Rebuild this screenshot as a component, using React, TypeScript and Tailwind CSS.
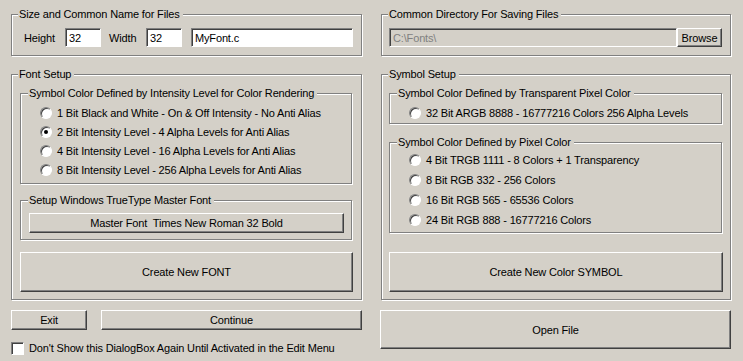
import React from 'react';
import clsx from 'clsx';

function Group({ label, className, labelClass, children }: { label: string; className?: string; labelClass?: string; children?: React.ReactNode }) {
  return (
    <div className={clsx('relative border border-[#808080] shadow-[inset_1px_1px_#fff,1px_1px_#fff]', className)}>
      <span className={clsx('absolute -top-[8px] bg-[#d4d0c8] pl-px pr-[3px] leading-[14px] whitespace-nowrap', labelClass ?? 'left-[6px]')}>
        {label}
      </span>
      {children}
    </div>
  );
}

function Btn({ className, children }: { className?: string; children: React.ReactNode }) {
  return (
    <button
      className={clsx(
        'flex items-center justify-center whitespace-pre border border-t-white border-l-white border-r-[#404040] border-b-[#404040] bg-[#d4d0c8] text-black shadow-[inset_-1px_-1px_#808080]',
        className
      )}
    >
      {children}
    </button>
  );
}

function Field({ value, className, disabled }: { value: string; className?: string; disabled?: boolean }) {
  return (
    <div
      className={clsx(
        'flex h-[19px] items-center border border-t-[#808080] border-l-[#808080] border-r-white border-b-white pl-[3px] shadow-[inset_1px_1px_#404040]',
        disabled ? 'bg-[#d4d0c8] text-[#808080]' : 'bg-white text-black',
        className
      )}
    >
      {value}
    </div>
  );
}

function Radio({ label, checked, className }: { label: string; checked?: boolean; className?: string }) {
  return (
    <div className={clsx('flex items-center', className)}>
      <span className="flex h-[12px] w-[12px] items-center justify-center rounded-full border border-t-[#808080] border-l-[#808080] border-r-white border-b-white bg-white shadow-[inset_1px_1px_#404040]">
        {checked && <span className="h-[4px] w-[4px] rounded-full bg-black" />}
      </span>
      <span className="ml-[5px] whitespace-nowrap">{label}</span>
    </div>
  );
}

const fontModes = [
  '1 Bit Black and White - On & Off Intensity - No Anti Alias',
  '2 Bit Intensity Level - 4 Alpha Levels for Anti Alias',
  '4 Bit Intensity Level - 16 Alpha Levels for Anti Alias',
  '8 Bit Intensity Level - 256 Alpha Levels for Anti Alias',
];

const pixelModes = [
  '4 Bit TRGB 1111 - 8 Colors + 1 Transparency',
  '8 Bit RGB 332 - 256 Colors',
  '16 Bit RGB 565 - 65536 Colors',
  '24 Bit RGB 888 - 16777216 Colors',
];

export default function App() {
  return (
    <div className="flex h-[361px] w-[743px] bg-[#d4d0c8] px-[11px] pt-[14px] font-['Liberation_Sans',Arial,sans-serif] text-[11px] leading-[14px] tracking-[-0.15px] text-black">
      {/* left column */}
      <div className="flex w-[351px] flex-col">
        <Group label="Size and Common Name for Files" className="h-[42px]">
          <div className="flex items-center pl-[12px] pt-[13px]">
            <span className="w-[41px]">Height</span>
            <Field value="32" className="w-[36px]" />
            <span className="ml-[8px] w-[37px]">Width</span>
            <Field value="32" className="w-[36px]" />
            <Field value="MyFont.c" className="ml-[9px] w-[162px]" />
          </div>
        </Group>

        <Group label="Font Setup" className="mt-[18px] h-[226px]">
          <div className="flex flex-col pl-[8px] pt-[18px]">
            <Group label="Symbol Color Defined by Intensity Level for Color Rendering" labelClass="left-[7px]" className="h-[91px] w-[332px]">
              <div className="flex flex-col pl-[19px] pt-[9px]">
                {fontModes.map((m, i) => (
                  <Radio key={m} label={m} checked={i === 1} className="h-[19px]" />
                ))}
              </div>
            </Group>

            <Group label="Setup Windows TrueType Master Font" labelClass="left-[7px]" className="mt-[16px] h-[40px] w-[332px]">
              <Btn className="ml-[8px] mt-[12px] h-[20px] w-[315px]">Master Font  Times New Roman 32 Bold</Btn>
            </Group>

            <Btn className="mt-[12px] h-[40px] w-[333px]">Create New FONT</Btn>
          </div>
        </Group>

        <div className="mt-[10px] flex">
          <Btn className="h-[20px] w-[76px]">Exit</Btn>
          <Btn className="ml-[14px] h-[20px] w-[261px]">Continue</Btn>
        </div>

        <div className="mt-[11px] flex items-center">
          <span className="h-[13px] w-[13px] border border-t-[#808080] border-l-[#808080] border-r-white border-b-white bg-white shadow-[inset_1px_1px_#404040]" />
          <span className="ml-[5px]">Don't Show this DialogBox Again Until Activated in the Edit Menu</span>
        </div>
      </div>

      {/* right column */}
      <div className="ml-[19px] flex w-[350px] flex-col">
        <Group label="Common Directory For Saving Files" className="h-[42px]">
          <div className="flex items-center pl-[7px] pt-[13px]">
            <Field value="C:\Fonts\" disabled className="w-[288px]" />
            <Btn className="h-[19px] w-[45px]">Browse</Btn>
          </div>
        </Group>

        <Group label="Symbol Setup" className="mt-[18px] h-[226px]">
          <div className="flex flex-col pl-[7px] pt-[18px]">
            <Group label="Symbol Color Defined by Transparent Pixel Color" labelClass="left-[7px]" className="h-[31px] w-[333px]">
              <div className="flex flex-col pl-[19px] pt-[9px]">
                <Radio label="32 Bit ARGB 8888 - 16777216 Colors 256 Alpha Levels" className="h-[19px]" />
              </div>
            </Group>

            <Group label="Symbol Color Defined by Pixel Color" labelClass="left-[7px]" className="mt-[18px] h-[91px] w-[333px]">
              <div className="flex flex-col pl-[19px] pt-[7px]">
                {pixelModes.map((m) => (
                  <Radio key={m} label={m} className="h-[20px]" />
                ))}
              </div>
            </Group>

            <Btn className="mt-[19px] h-[40px] w-[334px]">Create New Color SYMBOL</Btn>
          </div>
        </Group>

        <Btn className="-ml-px mt-[10px] h-[39px] w-[351px]">Open File</Btn>
      </div>
    </div>
  );
}
